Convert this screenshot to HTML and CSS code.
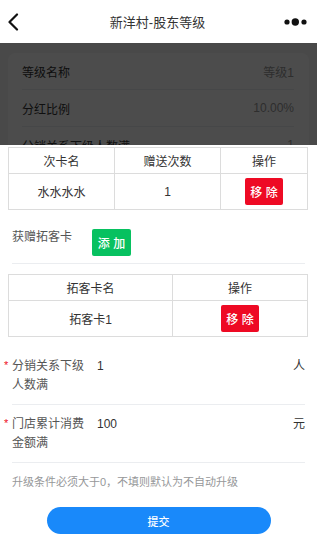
FILE: index.html
```html
<!DOCTYPE html>
<html lang="zh-CN">
<head>
<meta charset="utf-8">
<title>新洋村-股东等级</title>
<link rel="stylesheet" href="styles.css">
</head>
<body>
<div class="page">
  <header class="nav">
    <span class="nav-left">
      <svg width="12" height="18" viewBox="0 0 12 18"><path d="M10 1.5 L2.5 9 L10 16.5" fill="none" stroke="#111" stroke-width="2.2" stroke-linecap="round" stroke-linejoin="round"/></svg>
    </span>
    <span class="nav-title">新洋村-股东等级</span>
    <span class="nav-right">
      <svg width="24" height="8" viewBox="0 0 24 8"><circle cx="3" cy="4" r="2.6" fill="#111"/><circle cx="11.3" cy="4" r="3.7" fill="#111"/><circle cx="20" cy="4" r="2.6" fill="#111"/></svg>
    </span>
  </header>
  <main class="content">
    <section class="card">
      <div class="card-row"><span class="card-label">等级名称</span><span class="card-value">等级1</span></div>
      <div class="card-row"><span class="card-label">分红比例</span><span class="card-value">10.00%</span></div>
      <div class="card-row"><span class="card-label">分销关系下级人数满</span><span class="card-value">1</span></div>
    </section>
  </main>
</div>

<div class="overlay"></div>

<div class="popup">
  <table class="tbl t1">
    <thead>
      <tr><th>次卡名</th><th>赠送次数</th><th>操作</th></tr>
    </thead>
    <tbody>
      <tr><td>水水水水</td><td>1</td><td><button class="btn btn-red">移 除</button></td></tr>
    </tbody>
  </table>

  <div class="gift-row">
    <span class="gift-label">获赠拓客卡</span>
    <button class="btn btn-green">添 加</button>
  </div>

  <table class="tbl t2">
    <thead>
      <tr><th>拓客卡名</th><th>操作</th></tr>
    </thead>
    <tbody>
      <tr><td>拓客卡1</td><td><button class="btn btn-red">移 除</button></td></tr>
    </tbody>
  </table>

  <div class="field field-first">
    <span class="req">*</span>
    <span class="field-label">分销关系下级人数满</span>
    <span class="field-value">1</span>
    <span class="field-unit">人</span>
  </div>
  <div class="field">
    <span class="req">*</span>
    <span class="field-label">门店累计消费金额满</span>
    <span class="field-value">100</span>
    <span class="field-unit">元</span>
  </div>

  <p class="hint">升级条件必须大于0，不填则默认为不自动升级</p>

  <button class="submit">提交</button>
</div>
</body>
</html>
```

FILE: styles.css
```css
* { box-sizing: border-box; }
html, body {
  margin: 0;
  padding: 0;
  background: #f5f5f5;
  font-family: "Liberation Sans", "Noto Sans CJK SC", sans-serif;
  color: #333;
}
.page {
  width: 317px;
  height: 544px;
  overflow: hidden;
}
.nav {
  height: 43px;
  background: #fff;
  display: grid;
  grid-template-columns: 1fr auto 1fr;
  align-items: center;
  padding: 0 9px 0 7px;
  position: relative;
  z-index: 3;
}
.nav-left { display: flex; align-items: center; height: 18px; margin-top: 1px; }
.nav-title { font-size: 13px; color: #333; text-align: center; }
.nav-right { display: flex; justify-content: flex-end; margin-top: 1px; }

.content { padding: 10px 8px; }
.card {
  background: #fff;
  border-radius: 8px;
  padding: 0 15px 0 14px;
}
.card-row {
  height: 37px;
  display: flex;
  justify-content: space-between;
  align-items: center;
  border-bottom: 1px solid #ebedf0;
  font-size: 12px;
}
.card-label { color: #333; }
.card-value { color: #999; }

.overlay {
  position: fixed;
  left: 0;
  right: 0;
  top: 43px;
  bottom: 0;
  background: rgba(0, 0, 0, 0.7);
  z-index: 1;
}

.popup {
  position: fixed;
  left: 0;
  right: 0;
  bottom: 0;
  height: 399px;
  background: #fff;
  z-index: 2;
  padding-top: 2px;
}

.tbl {
  border-collapse: collapse;
  width: 300px;
  margin-left: 8px;
  table-layout: fixed;
  font-size: 12px;
  color: #333;
}
.tbl th, .tbl td {
  border: 1px solid #dcdcdc;
  text-align: center;
  padding: 0;
  font-weight: normal;
}
.tbl th { height: 26px; }
.tbl td { height: 36px; }
.t1 th:nth-child(1) { width: 106px; }
.t1 th:nth-child(2) { width: 106px; }
.t2 th:nth-child(1) { width: 164px; }

.btn {
  border: none;
  border-radius: 2px;
  color: #fff;
  font-family: inherit;
  font-size: 12px;
  font-weight: 500;
  padding: 0;
  display: inline-flex;
  align-items: center;
  justify-content: center;
  vertical-align: middle;
  white-space: pre;
}
.btn-red {
  background: #ee0a24;
  width: 38px;
  height: 27px;
}
.btn-green {
  background: #07c160;
  width: 39px;
  height: 27px;
}

.gift-row {
  display: flex;
  align-items: flex-start;
  margin: 19px 12px 0;
  padding-bottom: 7px;
  border-bottom: 1px solid #ebedf0;
}
.gift-label {
  flex: 0 0 80px;
  font-size: 12px;
  line-height: 16px;
  color: #555;
}

.t2 { margin-top: 10px; }

.field {
  position: relative;
  display: flex;
  align-items: flex-start;
  margin: 0 12px;
  padding: 10px 0 9px;
  border-bottom: 1px solid #ebedf0;
  font-size: 12px;
  line-height: 19px;
}
.field-first { margin-top: 10px; }
.req {
  position: absolute;
  left: -8px;
  top: 9px;
  color: #ee0a24;
  font-size: 11px;
}
.field-label {
  flex: 0 0 72px;
  color: #555;
}
.field-value {
  flex: 1;
  margin-left: 13px;
  color: #323233;
}
.field-unit { color: #333; }

.hint {
  margin: 11px 12px 0;
  font-size: 11px;
  line-height: 16px;
  color: #969799;
}

.submit {
  display: block;
  width: 224px;
  height: 27px;
  margin: 17px auto 0;
  border: none;
  border-radius: 14px;
  background: #1989fa;
  color: #fff;
  font-family: inherit;
  font-size: 11px;
  font-weight: 500;
}
```
